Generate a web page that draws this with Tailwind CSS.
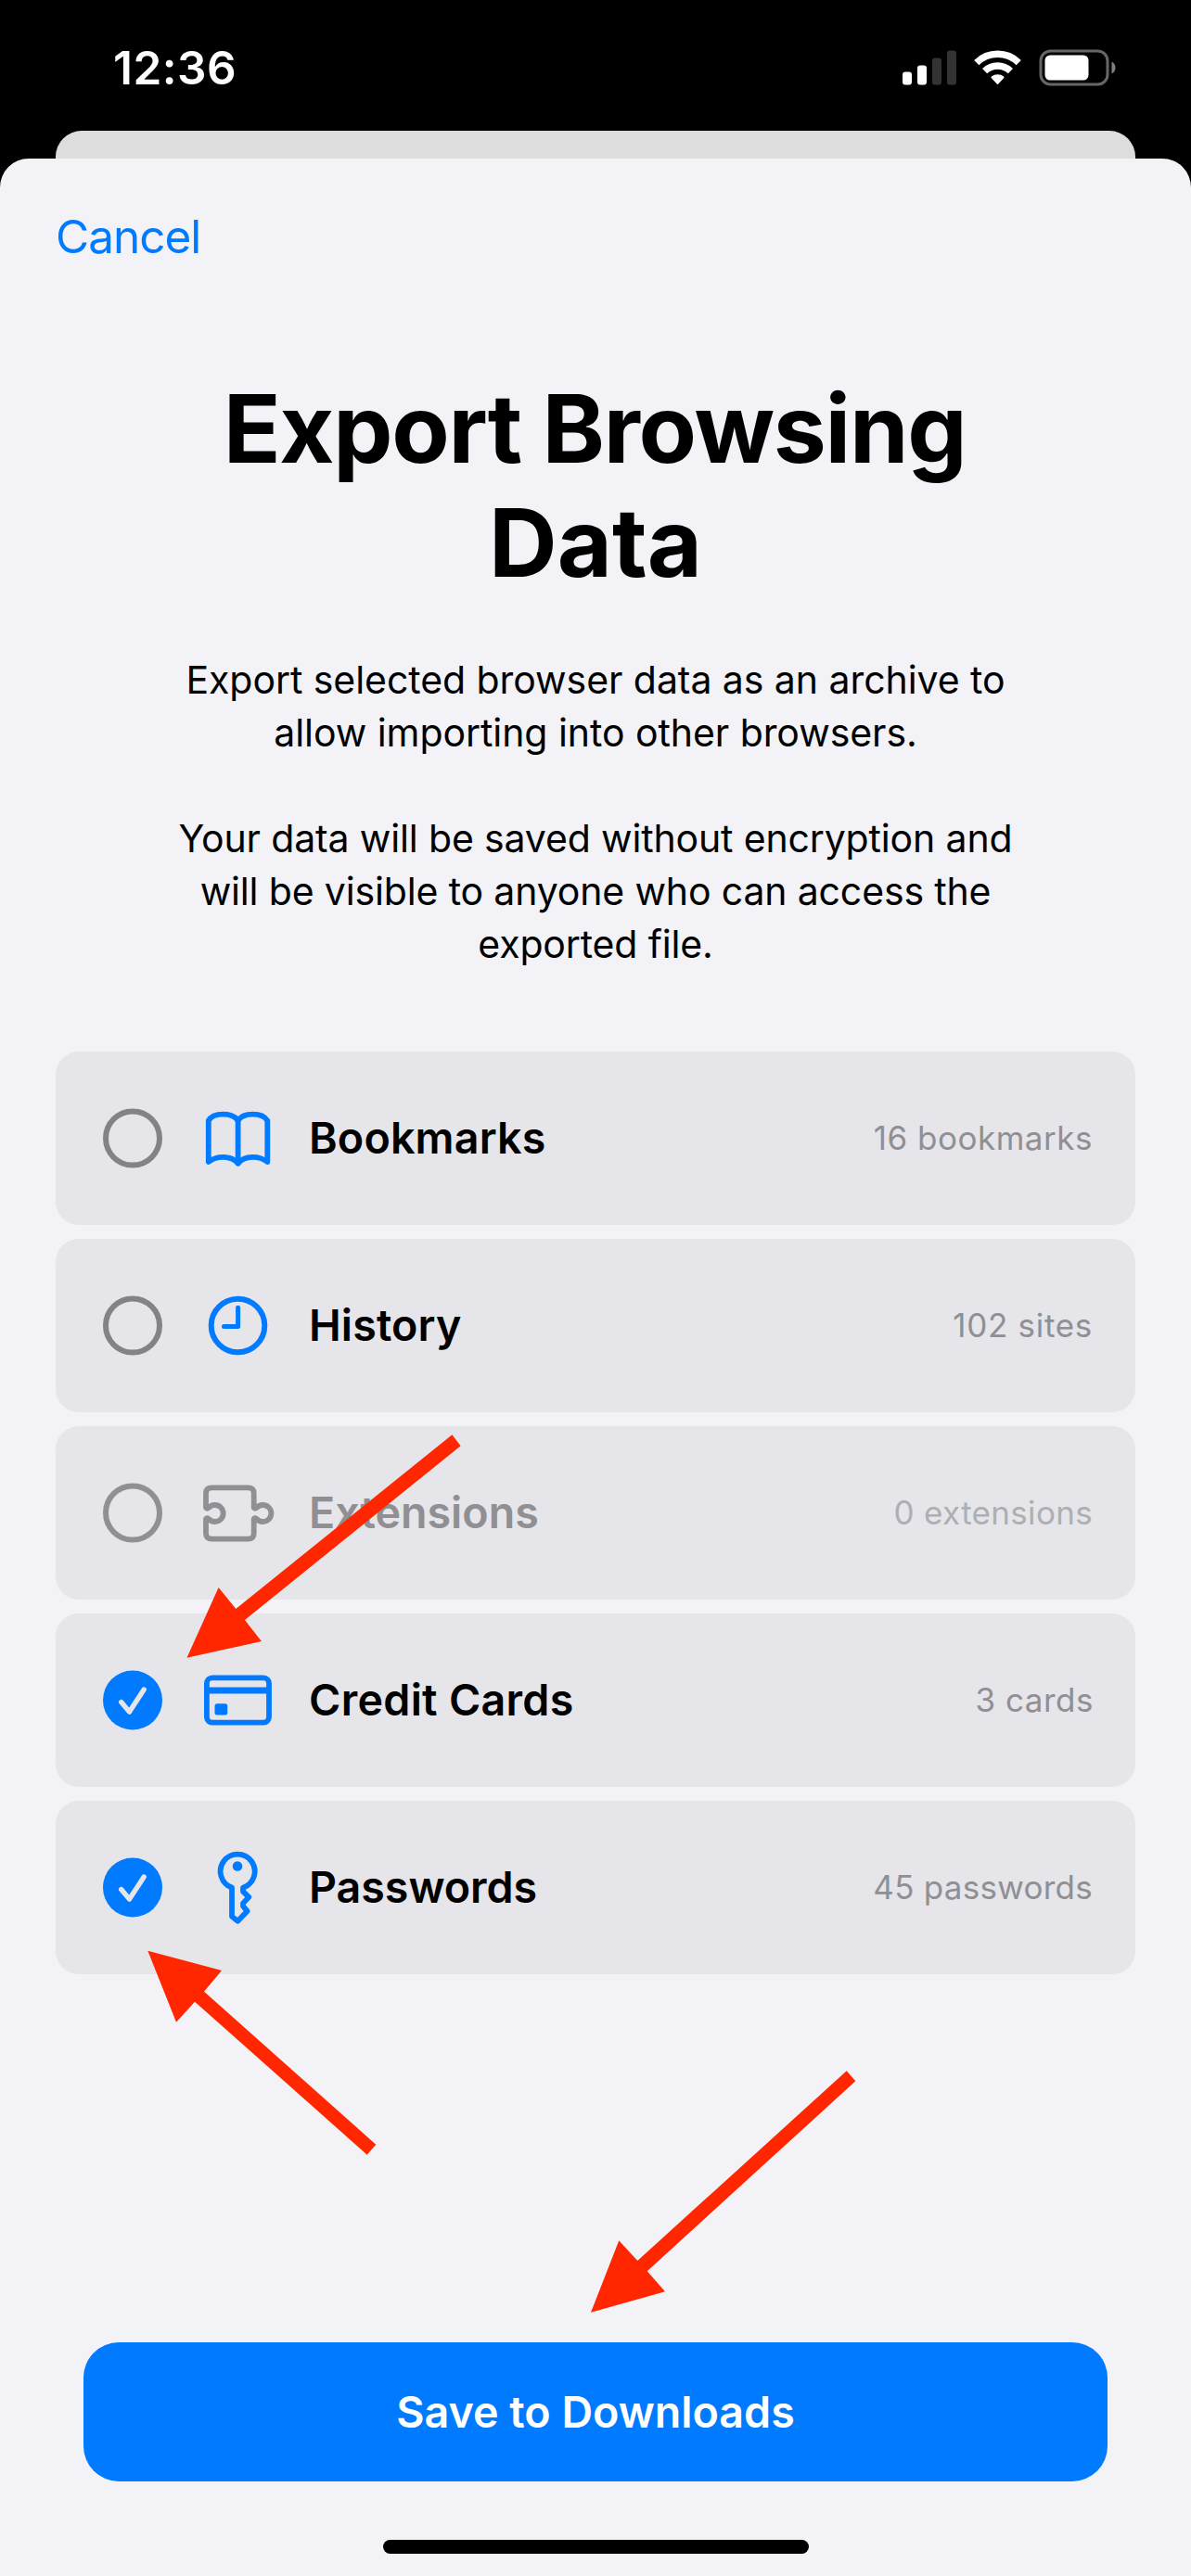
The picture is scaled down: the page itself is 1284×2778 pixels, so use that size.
<!DOCTYPE html>
<html lang="en">
<head>
<meta charset="utf-8">
<title>Export Browsing Data</title>
<script src="https://cdn.jsdelivr.net/npm/@tailwindcss/browser@4"></script>
</head>
<body class="bg-black">
<div class="relative flex h-[2778px] w-[1284px] flex-col overflow-hidden bg-black font-['Inter','Liberation_Sans',sans-serif] text-black">

  <!-- Status bar -->
  <header class="flex h-[141px] shrink-0 items-center justify-between pt-[5px] pr-[80px] pl-[122px] text-white">
    <span class="text-[49.5px] leading-[60px] font-semibold tracking-[0.46px]">12:36</span>
    <div class="flex items-center">
      <svg class="h-[40px] w-[60px]" viewBox="0 0 60 40">
        <rect x="1" y="24.500" width="10" height="14" rx="3" fill="#fff"/>
        <rect x="17" y="17.500" width="10" height="21" rx="3" fill="#fff"/>
        <rect x="33" y="9.500" width="10" height="29" rx="3" fill="#333"/>
        <rect x="49" y="1.500" width="10" height="37" rx="3" fill="#333"/>
      </svg>
      <svg class="ml-[17px] h-[40px] w-[53px]" viewBox="0 0 53 40">
        <g fill="none" stroke="#fff" stroke-width="7.500">
          <path d="M3.800 14.600 A32.500 32.500 0 0 1 49.200 14.600"/>
          <path d="M12.600 23.600 A20 20 0 0 1 40.400 23.600"/>
        </g>
        <path d="M19.600 30.900 A2 2 0 0 1 19.800 29.600 A10.500 10.500 0 0 1 33.200 29.600 A2 2 0 0 1 33.400 30.900 L27.300 37.600 A1.200 1.200 0 0 1 25.700 37.600 Z" fill="#fff"/>
      </svg>
      <svg class="ml-[18px] h-[40px] w-[84px]" viewBox="0 0 84 40">
        <rect x="2" y="2" width="72" height="36" rx="10.500" fill="none" stroke="#666" stroke-width="3"/>
        <rect x="6.500" y="6.500" width="47" height="27" rx="5.500" fill="#fff"/>
        <path d="M78.500 13.500 Q82.500 15.500 82.500 20 Q82.500 24.500 78.500 26.500 Z" fill="#808080"/>
      </svg>
    </div>
  </header>

  <!-- Page behind the sheet -->
  <div class="mx-[60px] h-[30px] shrink-0 rounded-t-[28px] bg-[#dddddd]"></div>

  <!-- Sheet -->
  <main class="flex flex-1 flex-col rounded-t-[31px] bg-[#f2f2f7]">
    <button class="mt-[54px] ml-[60px] self-start text-[49.5px] leading-[60px] tracking-[-1px] text-[#007aff]">Cancel</button>

    <h1 class="mt-[116px] text-center text-[102px] leading-[123px] font-bold">
      <span class="mr-[2px] tracking-[-1.3px]">Export Browsing</span><br>Data
    </h1>

    <div class="mt-[58px] flex flex-col gap-[57px] text-center text-[41px] leading-[57px]">
      <p class="tracking-[-0.06px]">Export selected browser data as an archive to<br>allow importing into other browsers.</p>
      <p class="tracking-[-0.15px]">Your data will be saved without encryption and<br>will be visible to anyone who can access the<br>exported file.</p>
    </div>

    <ul class="mx-[60px] mt-[87px] flex flex-col gap-[15px]">
      <li class="flex h-[187px] items-center rounded-[25px] bg-[#e5e5ea] pr-[46px] pl-[51px]">
        <svg class="size-[64px] shrink-0 overflow-visible" viewBox="0 0.500 64 64"><circle cx="32" cy="32" r="29" fill="none" stroke="#828287" stroke-width="6"/></svg>
        <svg class="ml-[31px] size-[100px] shrink-0" viewBox="0 0 100 100" fill="none" stroke="#007aff" stroke-width="5.800" stroke-linecap="round" stroke-linejoin="round">
          <path d="M18.800 75 V30.500 C24 21.200 45 21.200 50.600 30.500 C56 21.200 77 21.200 82.300 30.500 V75 C73 68 58 68 50.600 76.500 C43 68 28 68 18.800 75 Z"/>
          <path d="M50.600 30.500 V76.500"/>
        </svg>
        <span class="ml-[27px] flex-1 pt-px text-[46.6px] font-semibold tracking-[0.16px]">Bookmarks</span>
        <span class="text-[35px] tracking-[0.52px] text-[#8f8f94]">16 bookmarks</span>
      </li>

      <li class="flex h-[187px] items-center rounded-[25px] bg-[#e5e5ea] pr-[46px] pl-[51px]">
        <svg class="size-[64px] shrink-0 overflow-visible" viewBox="0 0.500 64 64"><circle cx="32" cy="32" r="29" fill="none" stroke="#828287" stroke-width="6"/></svg>
        <svg class="ml-[31px] size-[100px] shrink-0" viewBox="0 0 100 100" fill="none" stroke="#007aff" stroke-linecap="round" stroke-linejoin="round">
          <circle cx="50.500" cy="49.500" r="28.800" stroke-width="6"/>
          <path d="M50.600 30.300 V50.500 H35.500" stroke-width="5"/>
        </svg>
        <span class="ml-[27px] flex-1 pt-px text-[46.6px] font-semibold tracking-[0.13px]">History</span>
        <span class="text-[35px] tracking-[0.7px] text-[#8f8f94]">102 sites</span>
      </li>

      <li class="flex h-[187px] items-center rounded-[25px] bg-[#e5e5ea] pr-[46px] pl-[51px]">
        <svg class="size-[64px] shrink-0 overflow-visible" viewBox="0 0.500 64 64"><circle cx="32" cy="32" r="29" fill="none" stroke="#8f8f94" stroke-width="6"/></svg>
        <svg class="ml-[31px] size-[100px] shrink-0" viewBox="0 0 100 100" fill="none" stroke="#8f8f94" stroke-width="5.800" stroke-linejoin="round">
          <path d="M22.500 22.400 H61.500 Q67.700 22.400 67.700 28.600 V44 q1 1.500 3 0 A9 9 0 1 1 70.700 56 q-2 -1.500 -3 0 V71.400 Q67.700 77.600 61.500 77.600 H22.500 Q16 77.600 16 71.400 V56 q1 -1.500 3 0 A9 9 0 1 0 19 44 q-2 1.500 -3 0 V28.600 Q16 22.400 22.500 22.400 Z"/>
        </svg>
        <span class="ml-[27px] flex-1 pt-px text-[46.6px] font-semibold text-[#8f8f94]">Extensions</span>
        <span class="text-[35px] tracking-[0.32px] text-[#aeaeb3]">0 extensions</span>
      </li>

      <li class="flex h-[187px] items-center rounded-[25px] bg-[#e5e5ea] pr-[45px] pl-[51px]">
        <svg class="size-[64px] shrink-0 overflow-visible" viewBox="0 0.500 64 64"><circle cx="32" cy="32" r="32" fill="#007aff"/><path d="M19.700 34 L28.500 44.600 L44.200 20.600" fill="none" stroke="#e5e5ea" stroke-width="5.400" stroke-linecap="round" stroke-linejoin="round"/></svg>
        <svg class="ml-[31px] size-[100px] shrink-0" viewBox="0 0 100 100">
          <rect x="16.900" y="25.400" width="67.100" height="48.200" rx="6" fill="none" stroke="#007aff" stroke-width="5.800"/>
          <path d="M16.900 35.500 H84 V42.500 H16.900 Z" fill="#007aff"/>
          <rect x="25.500" y="53.300" width="13.700" height="12.200" rx="2.500" fill="#007aff"/>
        </svg>
        <span class="ml-[27px] flex-1 pt-px text-[46.6px] font-semibold tracking-[0.3px]">Credit Cards</span>
        <span class="text-[35px] tracking-[0.5px] text-[#8f8f94]">3 cards</span>
      </li>

      <li class="flex h-[187px] items-center rounded-[25px] bg-[#e5e5ea] pr-[46px] pl-[51px]">
        <svg class="size-[64px] shrink-0 overflow-visible" viewBox="0 0.500 64 64"><circle cx="32" cy="32" r="32" fill="#007aff"/><path d="M19.700 34 L28.500 44.600 L44.200 20.600" fill="none" stroke="#e5e5ea" stroke-width="5.400" stroke-linecap="round" stroke-linejoin="round"/></svg>
        <svg class="ml-[31px] size-[100px] shrink-0" viewBox="0 0 100 100">
          <path d="M44 80.800 V49.600 A18.500 18.500 0 1 1 56 49.700 V53.800 L62.300 59.800 L56 66.600 V69.600 L60.600 75 L50.300 85.800 Z" fill="none" stroke="#007aff" stroke-width="5.800" stroke-linejoin="round"/>
          <circle cx="50" cy="26.500" r="5.300" fill="#007aff"/>
        </svg>
        <span class="ml-[27px] flex-1 pt-px text-[46.6px] font-semibold tracking-[-0.05px]">Passwords</span>
        <span class="text-[35px] tracking-[0.26px] text-[#8f8f94]">45 passwords</span>
      </li>
    </ul>

    <button class="mx-[90px] mt-auto h-[150px] shrink-0 rounded-[38px] bg-[#007aff] pt-px text-[46.6px] font-semibold text-white">Save to Downloads</button>
    <div class="mx-auto mt-[63px] mb-[24px] h-[15px] w-[459px] shrink-0 rounded-full bg-black"></div>
  </main>

  <!-- Annotation arrows -->
  <svg class="pointer-events-none absolute inset-0 h-[2778px] w-[1284px]" viewBox="0 0 1284 2778" fill="#ff2600">
    <polygon points="201.500,1787.700 235.600,1712 254.300,1735 487.400,1547.300 496.600,1559.300 263.900,1747 281.900,1770"/>
    <polygon points="159.300,2103.700 239,2125 220,2147.700 405.300,2312.700 395.700,2323.700 210,2158.700 190,2180.700"/>
    <polygon points="637,2493.700 667.300,2416.300 687.300,2438 912.700,2233.300 922.300,2244.300 697.700,2449.300 717,2471.300"/>
  </svg>
</div>
</body>
</html>
